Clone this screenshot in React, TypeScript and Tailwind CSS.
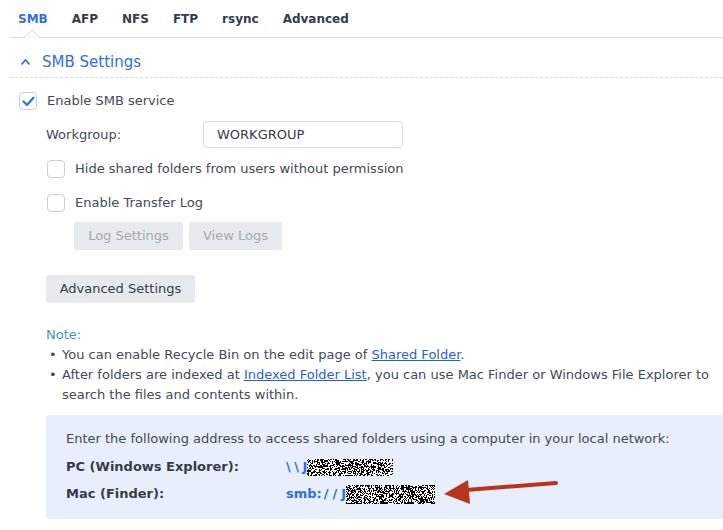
import React from "react";

function makeNoise(w: number, h: number, seed: number) {
  let s = seed;
  const rnd = () => {
    s = (s * 1103515245 + 12345) & 0x7fffffff;
    return s / 0x7fffffff;
  };
  const rects: React.ReactElement[] = [];
  for (let y = 0; y < h; y++) {
    for (let x = 0; x < w; x++) {
      if (rnd() < 0.5) rects.push(<rect key={`${x}-${y}`} x={x} y={y} width={1} height={1} />);
    }
  }
  return rects;
}

function Noise({ w, h, seed }: { w: number; h: number; seed: number }) {
  return (
    <svg width={w} height={h} viewBox={`0 0 ${w} ${h}`} shapeRendering="crispEdges" className="inline-block bg-white">
      <g fill="#000">{makeNoise(w, h, seed)}</g>
    </svg>
  );
}

function Checkbox({ checked }: { checked?: boolean }) {
  return (
    <span className="w-[18px] h-[18px] rounded-[4px] border border-[#c9d0d8] bg-white flex items-center justify-center shrink-0">
      {checked && (
        <svg width="13" height="11" viewBox="0 0 13 11">
          <path d="M1.5 5.5 L5 9 L11.5 1.8" fill="none" stroke="#2f6fe0" strokeWidth="2.2" strokeLinecap="round" strokeLinejoin="round" />
        </svg>
      )}
    </span>
  );
}

export default function App() {
  return (
    <div
      className="relative w-[723px] h-[530px] overflow-hidden bg-white text-[13px] text-[#414b55]"
      style={{ fontFamily: '"DejaVu Sans", Verdana, sans-serif' }}
    >
      {/* Tabs */}
      <div className="relative ml-[10px] h-[38px] border-b border-[#d5dce3] flex items-start pl-[8px] pt-[10px] gap-[24px] text-[12px] font-bold text-[#333d47]">
        <span className="text-[#2f6fe0]">SMB</span>
        <span>AFP</span>
        <span>NFS</span>
        <span>FTP</span>
        <span>rsync</span>
        <span>Advanced</span>
        <svg className="absolute left-[14px] top-[30px]" width="16" height="9" viewBox="0 0 16 9">
          <polyline points="0,7.5 8,0.5 16,7.5" fill="#fff" stroke="#d5dce3" strokeWidth="1" />
          <rect x="1" y="7.5" width="14" height="2" fill="#fff" />
        </svg>
      </div>

      {/* Section header */}
      <div className="ml-[10px] h-[40px] border-b border-dashed border-[#d5dce3] flex items-start gap-[11px] pl-[10px] pt-[14px] text-[#2f6fe0]">
        <svg className="mt-[6px]" width="11" height="8" viewBox="0 0 11 8">
          <path d="M1.5 6.5 L5.5 2 L9.5 6.5" fill="none" stroke="#2f6fe0" strokeWidth="1.7" />
        </svg>
        <span className="text-[15px] leading-[20px]">SMB Settings</span>
      </div>

      <div className="pl-[19px] pt-[14px]">
        <div className="flex items-center gap-[10px] h-[18px]">
          <Checkbox checked />
          <span>Enable SMB service</span>
        </div>

        <div className="pl-[27px]">
          <div className="flex items-center mt-[11px] h-[27px]">
            <span className="w-[157px]">Workgroup:</span>
            <div className="w-[200px] h-[27px] rounded-[4px] border border-[#d5dce3] flex items-center px-[13px] text-[#333d47]">
              WORKGROUP
            </div>
          </div>

          <div className="flex items-center gap-[10px] h-[18px] mt-[12px] pl-[1px]">
            <Checkbox />
            <span>Hide shared folders from users without permission</span>
          </div>

          <div className="flex items-center gap-[10px] h-[18px] mt-[16px] pl-[1px]">
            <Checkbox />
            <span>Enable Transfer Log</span>
          </div>

          <div className="flex gap-[6px] mt-[10px] pl-[28px]">
            <div className="h-[28px] w-[109px] rounded-[3px] bg-[#e6eaee] text-[#a3a9b0] flex items-center justify-center">Log Settings</div>
            <div className="h-[28px] w-[93px] rounded-[3px] bg-[#e6eaee] text-[#a3a9b0] flex items-center justify-center">View Logs</div>
          </div>

          <div className="mt-[25px]">
            <div className="h-[28px] w-[149px] rounded-[3px] bg-[#e6eaee] text-[#333d47] flex items-center justify-center">Advanced Settings</div>
          </div>

          <div className="mt-[22px] text-[#3f9c9c] leading-[20px]">Note:</div>
          <ul className="leading-[20px] text-[#414b55]">
            <li className="flex">
              <span className="w-[16px] pl-[3px] shrink-0">•</span>
              <span>
                You can enable Recycle Bin on the edit page of{" "}
                <span className="text-[#1f63d8] underline">Shared Folder</span>.
              </span>
            </li>
            <li className="flex">
              <span className="w-[16px] pl-[3px] shrink-0">•</span>
              <div className="flex flex-col">
                <div className="whitespace-nowrap">
                  After folders are indexed at <span className="text-[#1f63d8] underline">Indexed Folder List</span>, you can use Mac
                  Finder or Windows File Explorer to
                </div>
                <div>search the files and contents within.</div>
              </div>
            </li>
          </ul>

          <div className="mt-[10px] h-[104px] rounded-l-[4px] bg-[#e8eefa] pl-[20px] pt-[14px]">
            <div className="leading-[20px]">Enter the following address to access shared folders using a computer in your local network:</div>
            <div className="flex items-center h-[20px] mt-[8px]">
              <span className="w-[220px] font-bold text-[#333d47]">PC (Windows Explorer):</span>
              <span className="font-bold text-[#2f6fe0] flex items-center">
                <span className="tracking-[3.5px]">{"\\\\"}</span>J<Noise w={86} h={17} seed={7} />
              </span>
            </div>
            <div className="flex items-center h-[20px] mt-[7px]">
              <span className="w-[220px] font-bold text-[#333d47]">Mac (Finder):</span>
              <span className="font-bold text-[#2f6fe0] flex items-center">
                smb:<span className="tracking-[4px] pl-[2px]">//</span>J<Noise w={89} h={19} seed={31} />
              </span>
            </div>
          </div>
        </div>
      </div>

      {/* Red arrow annotation */}
      <svg className="absolute left-0 top-0 pointer-events-none" width="723" height="530" viewBox="0 0 723 530">
        <line x1="466" y1="490" x2="556" y2="483" stroke="#b8351c" strokeWidth="4" strokeLinecap="round" />
        <polygon points="444,494 468,480 470,504" fill="#b8351c" />
      </svg>
    </div>
  );
}
